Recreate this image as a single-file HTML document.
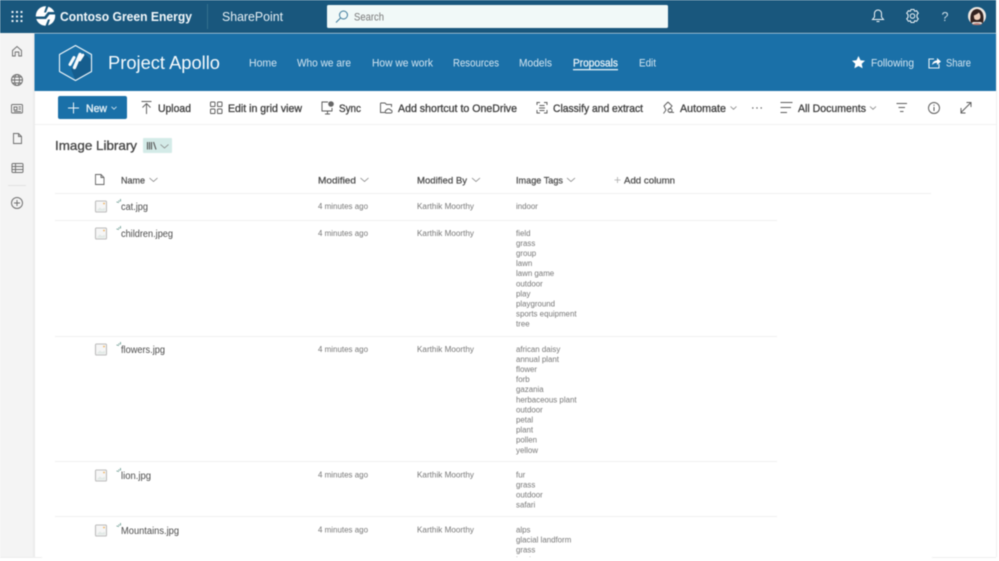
<!DOCTYPE html>
<html lang="en"><head><meta charset="utf-8"><title>Image Library</title>
<style>
html,body{margin:0;padding:0;background:#fff;width:999px;height:561px;overflow:hidden}
svg{display:block;filter:blur(.45px)}
text{font-family:"Liberation Sans",sans-serif}
.i{fill:none;stroke:#5c5c5c;stroke-width:.95}
.r{fill:none;stroke:#6f6f6f;stroke-width:.95}
.w{fill:none;stroke:#f2f7fa;stroke-width:1}
.nav{fill:#d5e6f1;font-size:11px}
.cmd{fill:#3c3c3c;font-size:11px;stroke:#3c3c3c;stroke-width:.3}
.hd{fill:#4a4a4a;font-size:9.5px;stroke:#4a4a4a;stroke-width:.22}
.nm{fill:#4b4b4b;font-size:10px}
.sm{fill:#777;font-size:7.9px}
.ln{stroke:#efefef;stroke-width:1}
.ch{fill:none;stroke:#808080;stroke-width:.8}
</style></head><body>
<svg width="999" height="561" viewBox="0 0 999 561" xmlns="http://www.w3.org/2000/svg">
<rect width="999" height="561" fill="#fff"/>
<rect width="996" height="33" fill="#19577d"/>
<rect y="33" width="35" height="524" fill="#f4f4f4"/>
<rect x="33" y="33" width="2" height="524" fill="#ececec"/>
<rect x="34.500" y="33.500" width="961.500" height="57.500" fill="#1a70a8"/>
<rect x="35" y="124" width="961" height="1" fill="#f1f1f1"/>
<rect x="996" y="33" width="1" height="524" fill="#f0f0f0"/>

<!-- waffle -->
<g fill="#e9f1f6"><rect x="11.500" y="11" width="2" height="2"/><rect x="16" y="11" width="2" height="2"/><rect x="20.500" y="11" width="2" height="2"/><rect x="11.500" y="15.500" width="2" height="2"/><rect x="16" y="15.500" width="2" height="2"/><rect x="20.500" y="15.500" width="2" height="2"/><rect x="11.500" y="20" width="2" height="2"/><rect x="16" y="20" width="2" height="2"/><rect x="20.500" y="20" width="2" height="2"/></g>
<!-- contoso logo -->
<circle cx="45.500" cy="16" r="9.700" fill="#fff"/>
<path d="M35 16.500H44.500L48 12H56.500V14.500H49.500L46 19H35Z" fill="#19577d"/>
<path d="M46.500 5L44 12.500H46L49 5ZM45 27L48 19.500H50L47.500 27Z" fill="#19577d"/>
<text x="60" y="21" font-size="13" font-weight="bold" fill="#f2f7fa" textLength="132" lengthAdjust="spacingAndGlyphs">Contoso Green Energy</text>
<rect x="207" y="4" width="1" height="25" fill="#34708f"/>
<text x="222" y="21" font-size="13" fill="#e8f1f6" textLength="61" lengthAdjust="spacingAndGlyphs">SharePoint</text>
<!-- search -->
<rect x="327" y="5" width="341" height="23" rx="1.500" fill="#f1f9f8"/>
<circle cx="343.500" cy="15" r="4" fill="none" stroke="#3c7a9c" stroke-width="1"/>
<path d="M340.500 18L336 22.500" stroke="#3c7a9c" stroke-width="1"/>
<text x="354" y="20.500" font-size="11" fill="#777" textLength="30" lengthAdjust="spacingAndGlyphs">Search</text>
<!-- top right -->
<path class="w" d="M872.500 19.500H883.500L881.500 17V13.500A3.500 3.500 0 0 0 874.500 13.500V17ZM876.500 21.500H879.500"/>
<g class="w"><circle cx="912.500" cy="16" r="2.300"/><path d="M911 9.500H914L914.700 11.300L916.600 10.700L918.300 13.200L917 14.600V17.400L918.300 18.800L916.600 21.300L914.700 20.700L914 22.500H911L910.300 20.700L908.400 21.300L906.700 18.800L908 17.400V14.600L906.700 13.200L908.400 10.700L910.300 11.300Z"/></g>
<text x="941.500" y="21" font-size="12.500" fill="#c9dce7">?</text>
<circle cx="977" cy="16" r="9" fill="#efe8e2"/>
<path d="M971 23.500C969.500 16 971 9.500 977 9C983 9.500 984.500 16 983 23.500L980.800 22L973.200 22Z" fill="#33221f"/>
<path d="M973.800 15.500C975.500 15 977.500 13.800 978.800 12.500C980.300 14 980.800 16 980.300 18C979.500 20.500 975 20.500 974.200 18.500Z" fill="#efcfbb"/>
<path d="M972 24.500Q977 21.500 982 24.500Q977 25.800 972 24.500Z" fill="#b97a72"/>

<!-- left rail -->
<path class="r" d="M12.500 50.500L17 46.500L21.500 50.500V56H18.800V52H15.200V56H12.500Z"/>
<g class="r"><circle cx="17" cy="80" r="5.500"/><ellipse cx="17" cy="80" rx="2.500" ry="5.500"/><path d="M11.500 80H22.500M12.500 77H21.500M12.500 83H21.500"/></g>
<g class="r"><rect x="11.500" y="104.500" width="11" height="8.500" rx="1"/><path d="M14 107H17V110H14ZM18.500 107H21M18.500 109H21M14 111.500H21"/></g>
<path class="r" d="M13.500 133.500H18.500L21.500 136.500V143.500H13.500ZM18.500 133.500V136.500H21.500"/>
<g class="r"><rect x="12" y="163.500" width="11" height="9" rx="1"/><path d="M12 166.500H23M12 169.500H23M15.500 163.500V172.500"/></g>
<rect x="8" y="185" width="18" height="1" fill="#e2e2e2"/>
<g class="r"><circle cx="17" cy="203" r="5.500"/><path d="M14 203H20M17 200V206"/></g>

<!-- site logo -->
<path d="M75.500 45.500L91.500 54.500V71.500L75.500 80.500L59.500 71.500V54.500Z" fill="#1a70a8"/>
<path d="M84 53L91.500 60V71.500L75.500 80.500L71 69Z" fill="#165d8d"/>
<path d="M75.500 45.500L91.500 54.500V71.500L75.500 80.500L59.500 71.500V54.500Z" fill="none" stroke="#f2f8fb" stroke-width="1.100" stroke-linejoin="round"/>
<path d="M70 64.500L74 57.500" stroke="#f8fbfd" stroke-width="3" stroke-linecap="round" fill="none"/>
<path d="M74.500 67.500L80 54.500" stroke="#f8fbfd" stroke-width="3.400" stroke-linecap="round" fill="none"/>
<path d="M79.800 60L83 55" stroke="#f8fbfd" stroke-width="2.600" stroke-linecap="round" fill="none"/>
<text x="108" y="69" font-size="18" fill="#f6fafc" textLength="112" lengthAdjust="spacingAndGlyphs">Project Apollo</text>
<text class="nav" x="249" y="66.500" textLength="28" lengthAdjust="spacingAndGlyphs">Home</text>
<text class="nav" x="297" y="66.500" textLength="54" lengthAdjust="spacingAndGlyphs">Who we are</text>
<text class="nav" x="372" y="66.500" textLength="61" lengthAdjust="spacingAndGlyphs">How we work</text>
<text class="nav" x="453" y="66.500" textLength="46" lengthAdjust="spacingAndGlyphs">Resources</text>
<text class="nav" x="519" y="66.500" textLength="33" lengthAdjust="spacingAndGlyphs">Models</text>
<text class="nav" x="573" y="66.500" textLength="45" lengthAdjust="spacingAndGlyphs" style="fill:#eaf3f8;stroke:#eaf3f8;stroke-width:.25">Proposals</text>
<rect x="573" y="69" width="45" height="1.300" fill="#e6f1f7"/>
<text class="nav" x="639" y="66.500" textLength="17" lengthAdjust="spacingAndGlyphs">Edit</text>
<path d="M858.500 56L860.500 60.300L865 60.800L861.700 63.800L862.600 68.300L858.500 66L854.400 68.300L855.300 63.800L852 60.800L856.500 60.300Z" fill="#fff"/>
<text class="nav" x="871" y="66.500" textLength="43" lengthAdjust="spacingAndGlyphs">Following</text>
<path d="M934 59H929V68H939V64" fill="none" stroke="#e6f1f7" stroke-width="1.100"/>
<path d="M932 65C932.500 61.500 935 60.500 937 60.500V58L941 61.500L937 65V62.800C935 62.800 933.500 63.500 932 65Z" fill="#fff"/>
<text class="nav" x="946" y="66.500" textLength="25" lengthAdjust="spacingAndGlyphs">Share</text>

<!-- command bar -->
<rect x="58" y="96" width="69" height="23" rx="2" fill="#1a70a8"/>
<path d="M68 108H79M73.500 102.500V113.500" stroke="#eef5f9" stroke-width="1"/>
<text x="86" y="112" font-size="11" fill="#e9f2f7" stroke="#e9f2f7" stroke-width=".3" textLength="21" lengthAdjust="spacingAndGlyphs">New</text>
<path d="M111.500 106.800L114 109.200L116.500 106.800" fill="none" stroke="#dcebf4" stroke-width=".8"/>

<path class="i" d="M141.500 101.500H151.500M146.500 114V103.500M142.500 107.500L146.500 103.500L150.500 107.500"/>
<text class="cmd" x="158" y="112" textLength="33" lengthAdjust="spacingAndGlyphs">Upload</text>
<g class="i"><rect x="210.500" y="102" width="4.500" height="4.500" rx=".8"/><rect x="217.500" y="102" width="4.500" height="4.500" rx=".8"/><rect x="210.500" y="109" width="4.500" height="4.500" rx=".8"/><rect x="217.500" y="109" width="4.500" height="4.500" rx=".8"/></g>
<text class="cmd" x="228" y="112" textLength="74" lengthAdjust="spacingAndGlyphs">Edit in grid view</text>
<path class="i" d="M328 102H322V111H332V108M325 114H330M327.500 111V114"/>
<circle cx="331" cy="104" r="2.800" fill="#666"/>
<text class="cmd" x="339" y="112" textLength="22" lengthAdjust="spacingAndGlyphs">Sync</text>
<path class="i" d="M380.500 103H385L386.500 104.500H391.500V107M380.500 103V112.500H385"/>
<path class="i" d="M386 113H391C392.500 113 392.500 110 390.500 110C390 108.500 387 108.500 386.500 110C385 110 385 113 386 113Z"/>
<text class="cmd" x="398" y="112" textLength="119" lengthAdjust="spacingAndGlyphs">Add shortcut to OneDrive</text>
<path class="i" d="M537 105V102.500H540M544 102.500H547V105M547 110V113H544M540 113H537V110M539.500 105.500H544.500M539 108H545M539.500 110.500H544.500"/>
<text class="cmd" x="553" y="112" textLength="90" lengthAdjust="spacingAndGlyphs">Classify and extract</text>
<path class="i" d="M668 102L664 106L666 110L663.500 113.500M668 102L672 106L669 109.500M668 110.500A2 2 0 1 0 672 110.500A2 2 0 1 0 668 110.500ZM669 112L674 112.500"/>
<text class="cmd" x="680" y="112" textLength="46" lengthAdjust="spacingAndGlyphs">Automate</text>
<path class="ch" d="M730.500 106.500L733.500 109.300L736.500 106.500"/>
<g fill="#555"><circle cx="752.800" cy="108" r=".7"/><circle cx="757" cy="108" r=".7"/><circle cx="761.200" cy="108" r=".7"/></g>
<path class="i" d="M780.500 102.500H792.500M780.500 107.500H791M780.500 112.500H787"/>
<text class="cmd" x="798" y="112" textLength="68" lengthAdjust="spacingAndGlyphs">All Documents</text>
<path class="ch" d="M870 106.500L873 109.300L876 106.500"/>
<path class="i" d="M896.500 103.500H907M898.500 107.500H905M900 111.500H903.500"/>
<circle class="i" cx="934" cy="108" r="5.500"/>
<path d="M934 107V111" stroke="#555"/><circle cx="934" cy="105.200" r=".6" fill="#555"/>
<path class="i" d="M961 112.500L971 102.500M966.500 102.500H971V107M961 108V113H965.500"/>

<!-- title -->
<text x="55" y="150" font-size="13" fill="#444" stroke="#444" stroke-width=".3" textLength="82" lengthAdjust="spacingAndGlyphs">Image Library</text>
<rect x="143" y="138" width="29" height="15" rx="1" fill="#d4ebe8"/>
<path d="M147.500 142V149.500M149.500 142V149.500M151.500 142V149.500M153.500 142L156 149.500" stroke="#555" stroke-width="1.100" fill="none"/>
<path class="ch" d="M160.500 144.500L164.500 148L168.500 144.500"/>

<!-- col headers -->
<path d="M95.500 174.500H101L104 177.500V184.500H95.500ZM101 174.500V177.500H104" fill="none" stroke="#666" stroke-width=".9"/>
<text class="hd" x="121" y="183.300" textLength="24" lengthAdjust="spacingAndGlyphs">Name</text>
<path class="ch" d="M149.500 178L153.500 181.500L157.500 178"/>
<text class="hd" x="318" y="183.300" textLength="38" lengthAdjust="spacingAndGlyphs">Modified</text>
<path class="ch" d="M360.500 178L364.500 181.500L368.500 178"/>
<text class="hd" x="417" y="183.300" textLength="50" lengthAdjust="spacingAndGlyphs">Modified By</text>
<path class="ch" d="M472 178L476 181.500L480 178"/>
<text class="hd" x="516" y="183.300" textLength="47" lengthAdjust="spacingAndGlyphs">Image Tags</text>
<path class="ch" d="M567 178L571 181.500L575 178"/>
<path d="M614.500 180H620.500M617.500 177V183" stroke="#aaa" stroke-width=".8"/>
<text class="hd" x="624" y="183.300" textLength="51" lengthAdjust="spacingAndGlyphs">Add column</text>

<!-- lines -->
<path class="ln" d="M55 193.500H931M55 220.500H777M55 336.500H777M55 461.500H777M55 516.500H777"/>

<!-- rows -->
<defs><g id="f"><rect x="95.500" y="-5.500" width="11" height="11" rx="1" fill="#f6f6f6" stroke="#bcbcbc" stroke-width="1.100"/><path d="M97 3.700L99.800 1L102 2.500L105 1.200V4.200H97Z" fill="#e2e9e6"/><circle cx="104" cy="-3" r=".9" fill="#eeb15c"/><path d="M116.500 -4.500L119 -4M120.500 -7.500L120.500 -5M118.500 -6L119.500 -5" stroke="#5d9186" stroke-width=".8" fill="none"/></g></defs>
<use href="#f" y="206.500"/>
<text class="nm" x="121" y="210" textLength="27" lengthAdjust="spacingAndGlyphs">cat.jpg</text>
<text class="sm" x="318" y="208.800" textLength="50" lengthAdjust="spacingAndGlyphs">4 minutes ago</text>
<text class="sm" x="417" y="208.800" textLength="57" lengthAdjust="spacingAndGlyphs">Karthik Moorthy</text>
<text class="sm" x="516" y="208.800">indoor</text>

<use href="#f" y="233.500"/>
<text class="nm" x="121" y="237" textLength="52" lengthAdjust="spacingAndGlyphs">children.jpeg</text>
<text class="sm" x="318" y="235.800" textLength="50" lengthAdjust="spacingAndGlyphs">4 minutes ago</text>
<text class="sm" x="417" y="235.800" textLength="57" lengthAdjust="spacingAndGlyphs">Karthik Moorthy</text>
<g class="sm">
<text x="516" y="235.800">field</text><text x="516" y="245.900">grass</text><text x="516" y="256">group</text><text x="516" y="266.100">lawn</text><text x="516" y="276.200">lawn game</text><text x="516" y="286.300">outdoor</text><text x="516" y="296.400">play</text><text x="516" y="306.500">playground</text><text x="516" y="316.600">sports equipment</text><text x="516" y="326.700">tree</text>
</g>

<use href="#f" y="349.500"/>
<text class="nm" x="121" y="353" textLength="44" lengthAdjust="spacingAndGlyphs">flowers.jpg</text>
<text class="sm" x="318" y="351.800" textLength="50" lengthAdjust="spacingAndGlyphs">4 minutes ago</text>
<text class="sm" x="417" y="351.800" textLength="57" lengthAdjust="spacingAndGlyphs">Karthik Moorthy</text>
<g class="sm">
<text x="516" y="351.800">african daisy</text><text x="516" y="361.900">annual plant</text><text x="516" y="372">flower</text><text x="516" y="382.100">forb</text><text x="516" y="392.200">gazania</text><text x="516" y="402.300">herbaceous plant</text><text x="516" y="412.400">outdoor</text><text x="516" y="422.500">petal</text><text x="516" y="432.600">plant</text><text x="516" y="442.700">pollen</text><text x="516" y="452.800">yellow</text>
</g>

<use href="#f" y="475.500"/>
<text class="nm" x="121" y="479" textLength="30" lengthAdjust="spacingAndGlyphs">lion.jpg</text>
<text class="sm" x="318" y="477.300" textLength="50" lengthAdjust="spacingAndGlyphs">4 minutes ago</text>
<text class="sm" x="417" y="477.300" textLength="57" lengthAdjust="spacingAndGlyphs">Karthik Moorthy</text>
<g class="sm">
<text x="516" y="477.300">fur</text><text x="516" y="487.400">grass</text><text x="516" y="497.500">outdoor</text><text x="516" y="507.600">safari</text>
</g>

<use href="#f" y="530.500"/>
<text class="nm" x="121" y="534" textLength="58" lengthAdjust="spacingAndGlyphs">Mountains.jpg</text>
<text class="sm" x="318" y="532.300" textLength="50" lengthAdjust="spacingAndGlyphs">4 minutes ago</text>
<text class="sm" x="417" y="532.300" textLength="57" lengthAdjust="spacingAndGlyphs">Karthik Moorthy</text>
<g class="sm">
<text x="516" y="532.300">alps</text><text x="516" y="542.400">glacial landform</text><text x="516" y="552.500">grass</text><text x="516" y="562.600">landscape</text>
</g>
<rect x="0" y="557" width="999" height="4" fill="#fff"/>
<rect x="0" y="557" width="42" height="1" fill="#eeeeee"/>
<rect x="932" y="557" width="64" height="1" fill="#eeeeee"/>
</svg>
</body></html>
